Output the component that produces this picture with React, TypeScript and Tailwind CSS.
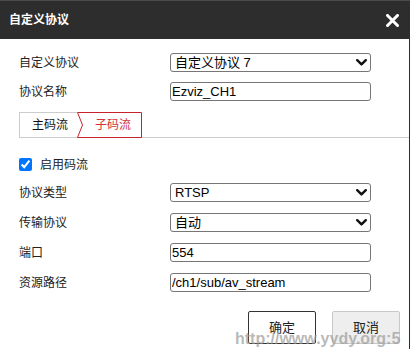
import React from 'react';

const Chevron: React.FC = () => (
  <svg width="11" height="7" viewBox="0 0 11 7" className="shrink-0">
    <path d="M1.2 1.2 L5.5 5.4 L9.8 1.2" fill="none" stroke="#111" strokeWidth="2.4" strokeLinecap="round" strokeLinejoin="round" />
  </svg>
);

const SelectBox: React.FC<{ value: string }> = ({ value }) => (
  <div className="w-[201px] h-[19px] border border-[#767676] rounded-[3px] flex items-center justify-between pl-[4px] pr-[3px] text-[13px] text-black leading-none">
    <span>{value}</span>
    <Chevron />
  </div>
);

const TextBox: React.FC<{ value: string }> = ({ value }) => (
  <div className="w-[201px] h-[19px] border border-[#767676] rounded-[3px] flex items-center pl-[1px] text-[13px] text-black leading-none">
    {value}
  </div>
);

const Row: React.FC<{ label: string; className?: string; children: React.ReactNode }> = ({ label, className, children }) => (
  <div className={`flex items-center h-[19px] ${className ?? ''}`}>
    <div className="w-[151px] text-[12px] text-[#222]">{label}</div>
    {children}
  </div>
);

const App: React.FC = () => {
  const font = { fontFamily: '"Liberation Sans", "Noto Sans CJK SC", sans-serif' };

  return (
    <div className="w-[410px] h-[349px] bg-[#2d2d2d] overflow-hidden relative flex flex-col" style={font}>
      {/* header */}
      <div className="h-[39px] shrink-0 border-t border-[#4a4a4a] flex items-center justify-between pl-[9px] pr-[11px]">
        <span className="text-white text-[12px] font-bold">自定义协议</span>
        <svg width="13" height="13" viewBox="0 0 13 13">
          <path d="M1.5 1.5 L11.5 11.5 M11.5 1.5 L1.5 11.5" stroke="#fff" strokeWidth="3" strokeLinecap="square" />
        </svg>
      </div>

      {/* body */}
      <div className="w-[409px] flex-1 bg-white pt-[14px] pl-[19px]">
        <Row label="自定义协议">
          <SelectBox value="自定义协议 7" />
        </Row>
        <Row label="协议名称" className="mt-[10px]">
          <TextBox value="Ezviz_CH1" />
        </Row>

        {/* tabs */}
        <div className="mt-[11px] flex items-start h-[26px] border-b border-[#cccccc]">
          <div className="w-[58px] h-[25px] border-l border-t border-[#cccccc] flex items-center pl-[12px] text-[12px] text-[#111]">
            主码流
          </div>
          <div className="relative w-[65px] h-[26px] flex items-center pl-[18px] text-[12px] text-[#d0343a]">
            <svg className="absolute inset-0" width="65" height="26" viewBox="0 0 65 26">
              <polygon points="0.5,0.5 64.5,0.5 64.5,25.5 0.5,25.5 5.5,13" fill="none" stroke="#c8232c" strokeWidth="1" />
            </svg>
            <span className="relative">子码流</span>
          </div>
        </div>

        <div className="mt-[20px] h-[13px] flex items-center">
          <input type="checkbox" defaultChecked className="w-[13px] h-[13px] m-0 accent-[#0075ff]" />
          <span className="ml-[8px] text-[12px] text-[#222]">启用码流</span>
        </div>

        <Row label="协议类型" className="mt-[12px]">
          <SelectBox value="RTSP" />
        </Row>
        <Row label="传输协议" className="mt-[11px]">
          <SelectBox value="自动" />
        </Row>
        <Row label="端口" className="mt-[11px]">
          <TextBox value="554" />
        </Row>
        <Row label="资源路径" className="mt-[11px]">
          <TextBox value="/ch1/sub/av_stream" />
        </Row>

        <div className="mt-[19px] flex justify-end gap-[16px] pr-[9px]">
          <button className="w-[68px] h-[33px] border border-[#333] rounded-[2px] bg-white text-[13px] text-[#222]">确定</button>
          <button className="w-[68px] h-[33px] border border-[#c8c8c8] rounded-[2px] bg-[#eeeeee] text-[13px] text-[#222]">取消</button>
        </div>
      </div>

      {/* watermark */}
      <div className="absolute left-[235px] top-[327px] text-[16px] font-bold text-[#9a9a9a]/70 whitespace-nowrap">
        http://www.yydy.org:5
      </div>
    </div>
  );
};

export default App;
